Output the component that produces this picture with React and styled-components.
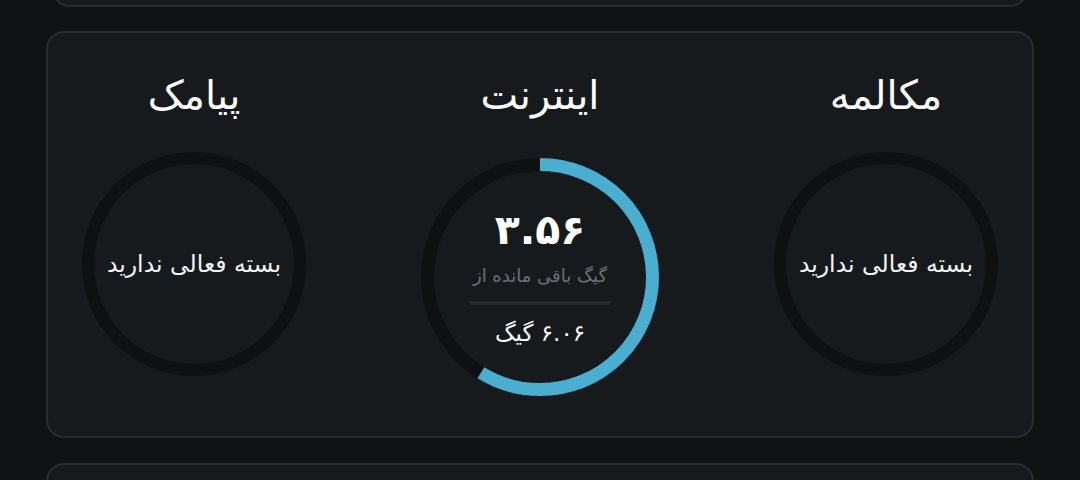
import styled, { createGlobalStyle } from "styled-components"

const GlobalStyle = createGlobalStyle`
  *, *::before, *::after {
    box-sizing: border-box;
  }
  html, body {
    margin: 0;
    padding: 0;
    background: #111214;
  }
  body {
    font-family: "DejaVu Sans", "Noto Sans", sans-serif;
    color: #f2f3f5;
    overflow: hidden;
  }
`

const packages = [
  { key: "call", title: "مکالمه" },
  { key: "net", title: "اینترنت", remain: "۳.۵۶", total: "۶.۰۶ گیگ", ratio: 3.56 / 6.06 },
  { key: "sms", title: "پیامک" },
]

const Ring = ({ size, stroke, ratio, children, offset }) => {
  const r = (size - stroke) / 2
  const c = 2 * Math.PI * r
  return (
    <RingBox $size={size} $offset={offset}>
      <svg width={size} height={size} viewBox={`0 0 ${size} ${size}`}>
        <circle cx={size / 2} cy={size / 2} r={r} fill="none" stroke="#0f1012" strokeWidth={stroke} />
        {ratio ? (
          <circle
            cx={size / 2}
            cy={size / 2}
            r={r}
            fill="none"
            stroke="#4aaed0"
            strokeWidth={stroke}
            strokeDasharray={`${c * ratio} ${c}`}
            transform={`rotate(-90 ${size / 2} ${size / 2})`}
          />
        ) : null}
      </svg>
      <RingContent>{children}</RingContent>
    </RingBox>
  )
}

const App = () => {
  return (
    <Page>
      <GlobalStyle />
      <TopCard />
      <Card>
        <Columns>
          {packages.map((p) =>
            p.ratio ? (
              <Column key={p.key}>
                <Title>{p.title}</Title>
                <Ring size={238} stroke={13} ratio={p.ratio} offset={41}>
                  <Remain>{p.remain}</Remain>
                  <Caption>گیگ باقی مانده از</Caption>
                  <Divider />
                  <Total>{p.total}</Total>
                </Ring>
              </Column>
            ) : (
              <Column key={p.key}>
                <Title>{p.title}</Title>
                <Ring size={224} stroke={12} offset={35}>
                  <Empty>بسته فعالی ندارید</Empty>
                </Ring>
              </Column>
            )
          )}
        </Columns>
      </Card>
      <BottomCard />
    </Page>
  )
}

export default App

const Page = styled.div`
  direction: rtl;
  display: flex;
  flex-direction: column;
  gap: 24px;
  padding: 0 46px;
  height: 480px;
  overflow: hidden;
`

const TopCard = styled.div`
  height: 60px;
  margin: -53px 6px 0 6px;
  background: #171a1d;
  border: 2px solid #282b30;
  border-radius: 18px;
  flex-shrink: 0;
`

const Card = styled.div`
  background: #171a1d;
  border: 2px solid #282b30;
  border-radius: 18px;
  padding: 40px 0 40px 0;
  flex-shrink: 0;
`

const BottomCard = styled.div`
  height: 80px;
  background: #171a1d;
  border: 2px solid #282b30;
  border-radius: 18px;
  flex-shrink: 0;
  margin-top: 1px;
`

const Columns = styled.div`
  display: grid;
  grid-template-columns: repeat(3, 280px);
  column-gap: 66px;
  justify-content: center;
  align-items: start;
`

const Column = styled.div`
  display: flex;
  flex-direction: column;
  align-items: center;
`

const Title = styled.div`
  font-size: 40px;
  line-height: 44px;
  height: 44px;
  color: #ffffff;
  white-space: nowrap;
`

const RingBox = styled.div`
  position: relative;
  width: ${(p) => p.$size}px;
  height: ${(p) => p.$size}px;
  margin-top: ${(p) => p.$offset}px;

  svg {
    position: absolute;
    inset: 0;
    display: block;
  }
`

const RingContent = styled.div`
  position: absolute;
  inset: 0;
  display: flex;
  flex-direction: column;
  align-items: center;
  justify-content: center;
`

const Empty = styled.div`
  font-size: 23.5px;
  line-height: 28px;
  color: #f4f5f6;
  white-space: nowrap;
`

const Remain = styled.div`
  font-size: 41px;
  font-weight: 700;
  line-height: 48px;
  color: #ffffff;
`

const Caption = styled.div`
  margin-top: 9px;
  font-size: 18px;
  line-height: 26px;
  color: #6c7077;
  white-space: nowrap;
`

const Divider = styled.div`
  margin-top: 12px;
  width: 142px;
  height: 4px;
  border-radius: 2px;
  background: #24272b;
`

const Total = styled.div`
  margin-top: 13px;
  font-size: 23px;
  line-height: 30px;
  color: #ffffff;
  white-space: nowrap;
`
